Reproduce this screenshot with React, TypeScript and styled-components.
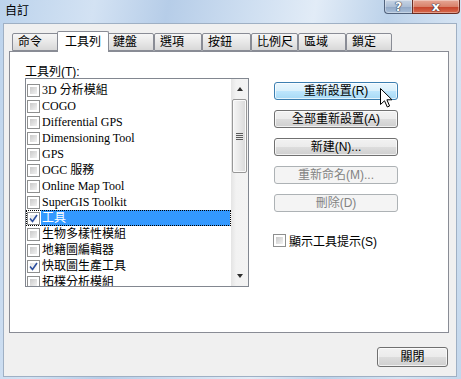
import React from "react";
import styled, { createGlobalStyle } from "styled-components";

const GlobalStyle = createGlobalStyle`
  html, body {
    margin: 0;
    padding: 0;
    overflow: hidden;
  }
`;

const TABS = [
  { label: "命令", width: 47 },
  { label: "工具列", width: 52, active: true },
  { label: "鍵盤", width: 47 },
  { label: "選項", width: 48 },
  { label: "按鈕", width: 49 },
  { label: "比例尺", width: 47 },
  { label: "區域", width: 48 },
  { label: "鎖定", width: 46 },
];

const TOOLBARS = [
  { name: "3D 分析模組" },
  { name: "COGO" },
  { name: "Differential GPS" },
  { name: "Dimensioning Tool" },
  { name: "GPS" },
  { name: "OGC 服務" },
  { name: "Online Map Tool" },
  { name: "SuperGIS Toolkit" },
  { name: "工具", checked: true, selected: true },
  { name: "生物多樣性模組" },
  { name: "地籍圖編輯器" },
  { name: "快取圖生產工具", checked: true },
  { name: "拓樸分析模組" },
];

const UI_FONT = `"Liberation Sans", "Noto Sans CJK TC", sans-serif`;
const LIST_FONT = `"Liberation Serif", "Noto Sans CJK TC", serif`;

function CheckBox({ checked }: { checked?: boolean }) {
  return (
    <StCheck checked={checked}>
      {checked && (
        <svg width="9" height="9" viewBox="0 0 9 9">
          <path
            d="M1 4.5 L3.5 7.5 L8 1"
            fill="none"
            stroke="#2d4f9e"
            strokeWidth="1.6"
          />
        </svg>
      )}
    </StCheck>
  );
}

function Cursor() {
  return (
    <StCursor width="14" height="21" viewBox="0 0 14 21">
      <path
        d="M0.5 0.5 L0.5 16.5 L4.5 12.8 L7.3 19 L9.6 18 L6.9 11.8 L12 11.8 Z"
        fill="#fff"
        stroke="#000"
        strokeWidth="1"
      />
    </StCursor>
  );
}

export default function App() {
  return (
    <>
      <GlobalStyle />
      <StWindow>
        <StTitleBar>
          <StTitle>自訂</StTitle>
          <StCaptionButtons>
            <StCaptionButton kind="help">?</StCaptionButton>
            <StCaptionButton kind="close">x</StCaptionButton>
          </StCaptionButtons>
        </StTitleBar>
        <StBody>
          <StTabStrip>
            {TABS.map((tab) => (
              <StTab key={tab.label} active={tab.active} style={{ width: tab.width }}>
                {tab.label}
              </StTab>
            ))}
          </StTabStrip>
          <StPanel>
            <StLeftCol>
              <StLabel>工具列(T):</StLabel>
              <StListBox>
                <StItems>
                  {TOOLBARS.map((item) => (
                    <StRow key={item.name} selected={item.selected}>
                      <CheckBox checked={item.checked} />
                      <StRowText selected={item.selected}>{item.name}</StRowText>
                    </StRow>
                  ))}
                </StItems>
                <StScrollBar>
                  <StArrow dir="up" />
                  <StThumb>
                    <StGrip />
                  </StThumb>
                  <StTrack />
                  <StArrow dir="down" />
                </StScrollBar>
              </StListBox>
            </StLeftCol>
            <StRightCol>
              <StButtonWrap>
                <StButton hover>重新設置(R)</StButton>
                <Cursor />
              </StButtonWrap>
              <StButton>全部重新設置(A)</StButton>
              <StButton>新建(N)...</StButton>
              <StButton disabled>重新命名(M)...</StButton>
              <StButton disabled>刪除(D)</StButton>
              <StCheckRow>
                <CheckBox />
                <span>顯示工具提示(S)</span>
              </StCheckRow>
            </StRightCol>
          </StPanel>
          <StFooter>
            <StCloseButton>關閉</StCloseButton>
          </StFooter>
        </StBody>
      </StWindow>
    </>
  );
}

const StWindow = styled.div`
  width: 461px;
  height: 379px;
  display: flex;
  flex-direction: column;
  background: linear-gradient(
    100deg,
    #bcd3ec 0%,
    #d3e2f3 18%,
    #b6cde8 32%,
    #cfdff1 48%,
    #e2ecf7 60%,
    #bcd2ea 74%,
    #d6e4f3 88%,
    #c3d7ec 100%
  );
  font-family: ${UI_FONT};
  font-size: 12px;
  color: #000;
`;

const StTitleBar = styled.div`
  height: 23px;
  display: flex;
  justify-content: space-between;
  align-items: flex-start;
  padding: 0 1px 0 5px;
  box-sizing: border-box;
`;

const StTitle = styled.div`
  margin-top: 4px;
  font-size: 12px;
  line-height: 14px;
`;

const StCaptionButtons = styled.div`
  display: flex;
`;

const StCaptionButton = styled.div<{ kind: "help" | "close" }>`
  width: ${(p) => (p.kind === "help" ? 28 : 48)}px;
  height: 14px;
  box-sizing: border-box;
  border: 1px solid ${(p) => (p.kind === "help" ? "#52637d" : "#6b2d22")};
  border-top: none;
  ${(p) => (p.kind === "help" ? "border-right: none;" : "")}
  border-radius: ${(p) => (p.kind === "help" ? "0 0 0 4px" : "0 0 4px 0")};
  background: ${(p) =>
    p.kind === "help"
      ? "linear-gradient(#c7d4e4, #adbfd6 50%, #93a9c6 55%, #a9bfd9)"
      : "linear-gradient(#e6a796, #d9826b 50%, #c6442c 55%, #d86a4c)"};
  box-shadow: inset 0 0 0 1px rgba(255, 255, 255, 0.35);
  display: flex;
  align-items: center;
  justify-content: center;
  font-family: "DejaVu Sans", sans-serif;
  font-weight: bold;
  font-size: ${(p) => (p.kind === "help" ? 12 : 13)}px;
  line-height: 12px;
  color: #fff;
  text-shadow: 0 0 1px #2b3446, 0 0 1px #2b3446, 0 0 1px #2b3446;
`;

const StBody = styled.div`
  flex: 1;
  margin: 0 4px 2px 3px;
  border: 1px solid #9fb0c4;
  background: #f0f0f0;
  display: flex;
  flex-direction: column;
  padding-top: 7px;
`;

const StTabStrip = styled.div`
  height: 20px;
  display: flex;
  align-items: flex-end;
  padding-left: 8px;
  position: relative;
  z-index: 1;
`;

const StTab = styled.div<{ active?: boolean }>`
  box-sizing: border-box;
  height: ${(p) => (p.active ? 21 : 18)}px;
  margin: ${(p) => (p.active ? "0 -2px -1px -2px" : "0")};
  position: relative;
  z-index: ${(p) => (p.active ? 2 : 1)};
  border: 1px solid #898c95;
  border-bottom: ${(p) => (p.active ? "none" : "1px solid #898c95")};
  border-radius: 2px 2px 0 0;
  background: ${(p) =>
    p.active ? "#ffffff" : "linear-gradient(#f6f6f6, #e8e8e8 50%, #d8d8d8)"};
  padding-left: ${(p) => (p.active ? 7 : 5)}px;
  line-height: ${(p) => (p.active ? 20 : 16)}px;
  font-size: 12px;
  white-space: nowrap;
`;

const StPanel = styled.div`
  height: 282px;
  box-sizing: border-box;
  margin-left: 5px;
  width: 440px;
  border: 1px solid #898c95;
  background: #fff;
  display: flex;
  gap: 25px;
  padding: 14px 0 0 15px;
`;

const StLeftCol = styled.div`
  display: flex;
  flex-direction: column;
  width: 224px;
`;

const StLabel = styled.div`
  line-height: 12px;
  height: 12px;
`;

const StListBox = styled.div`
  height: 209px;
  box-sizing: border-box;
  border: 1px solid #828790;
  display: flex;
  overflow: hidden;
`;

const StItems = styled.div`
  flex: 1;
  padding-top: 3px;
  overflow: hidden;
  font-family: ${LIST_FONT};
`;

const StRow = styled.div<{ selected?: boolean }>`
  height: 16px;
  display: flex;
  align-items: center;
  padding-left: 1px;
  box-sizing: border-box;
  outline: ${(p) => (p.selected ? "1px dotted #000" : "none")};
  outline-offset: -1px;
  white-space: nowrap;
`;

const StRowText = styled.span<{ selected?: boolean }>`
  flex: 1;
  height: 16px;
  margin-left: 1px;
  margin-right: 1px;
  padding-left: 1px;
  line-height: 16px;
  background: ${(p) => (p.selected ? "#3399ff" : "transparent")};
  color: ${(p) => (p.selected ? "#fff" : "#000")};
  font-size: 12px;
`;

const StCheck = styled.span<{ checked?: boolean }>`
  width: 13px;
  height: 13px;
  box-sizing: border-box;
  flex-shrink: 0;
  border: 1px solid #8e8f8f;
  background: #fff;
  padding: 1px;
  display: inline-flex;
  align-items: center;
  justify-content: center;
  position: relative;
  &::before {
    content: "";
    position: absolute;
    inset: 2px;
    background: ${(p) =>
      p.checked
        ? "linear-gradient(135deg, #e4e4e4, #fbfbfb)"
        : "linear-gradient(135deg, #c9c9c9, #f2f2f2)"};
  }
  svg {
    position: relative;
    z-index: 1;
  }
`;

const StScrollBar = styled.div`
  width: 17px;
  display: flex;
  flex-direction: column;
  background: linear-gradient(to right, #e4e4e4, #f2f2f2 30%, #f3f3f3);
`;

const StArrow = styled.div<{ dir: "up" | "down" }>`
  height: 20px;
  flex-shrink: 0;
  display: flex;
  align-items: center;
  justify-content: center;
  &::after {
    content: "";
    border-left: 3.5px solid transparent;
    border-right: 3.5px solid transparent;
    ${(p) =>
      p.dir === "up"
        ? "border-bottom: 4px solid #2e2e2e;"
        : "border-top: 4px solid #2e2e2e;"}
  }
`;

const StThumb = styled.div`
  height: 74px;
  margin: 0 1px;
  box-sizing: border-box;
  border: 1px solid #979797;
  border-radius: 2px;
  background: linear-gradient(to right, #f5f5f5, #e8e8e8 50%, #d9d9d9);
  box-shadow: inset 0 0 0 1px #fafafa;
  display: flex;
  align-items: center;
  justify-content: center;
`;

const StGrip = styled.div`
  width: 7px;
  height: 7px;
  background: repeating-linear-gradient(
    #5a5a5a 0,
    #5a5a5a 1px,
    #e8e8e8 1px,
    #e8e8e8 2px
  );
`;

const StTrack = styled.div`
  flex: 1;
`;

const StRightCol = styled.div`
  width: 124px;
  padding-top: 16px;
  display: flex;
  flex-direction: column;
  gap: 10px;
`;

const StButtonWrap = styled.div`
  position: relative;
  display: flex;
`;

const StCursor = styled.svg`
  position: absolute;
  left: 106px;
  top: 6px;
`;

const StButton = styled.button<{ hover?: boolean }>`
  width: 124px;
  height: 18px;
  padding: 0;
  box-sizing: border-box;
  border-radius: 3px;
  font-family: ${UI_FONT};
  font-size: 12px;
  line-height: 14px;
  border: 1px solid ${(p) => (p.hover ? "#3c7fb1" : "#707070")};
  background: ${(p) =>
    p.hover
      ? "linear-gradient(#eaf6fd, #d9f0fc 50%, #bee6fd 50%, #a7d9f5)"
      : "linear-gradient(#f2f2f2, #ebebeb 50%, #dddddd 50%, #cfcfcf)"};
  box-shadow: inset 0 0 0 1px rgba(255, 255, 255, 0.7);
  color: #000;

  &:disabled {
    border-color: #adb2b5;
    background: #f4f4f4;
    color: #838383;
    box-shadow: none;
  }
`;

const StCheckRow = styled.label`
  display: flex;
  align-items: center;
  gap: 3px;
  margin-top: 11px;
  margin-left: -1px;
  height: 14px;
  white-space: nowrap;
`;

const StFooter = styled.div`
  display: flex;
  justify-content: flex-end;
  padding: 14px 8px 0 0;
`;

const StCloseButton = styled(StButton)`
  width: 71px;
  height: 20px;
`;
